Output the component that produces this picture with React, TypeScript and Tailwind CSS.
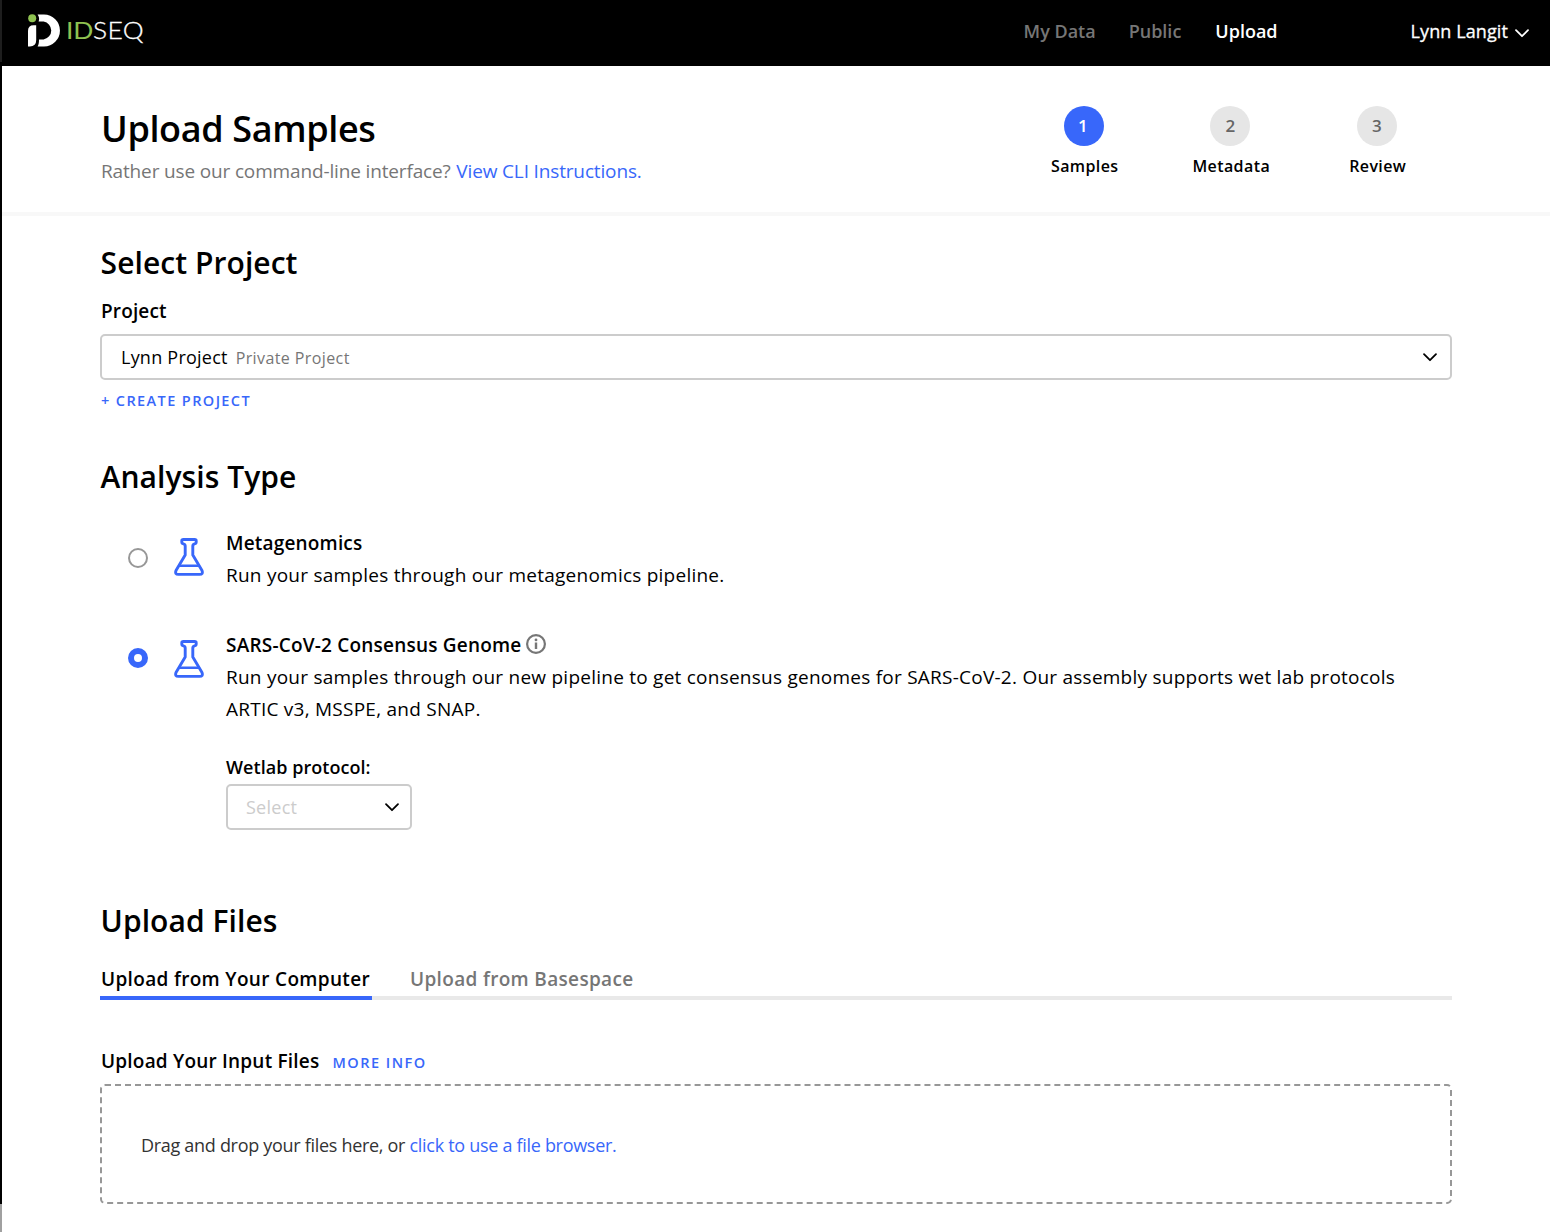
import type { ReactNode } from "react";

function Logo() {
  return (
    <div className="flex items-start">
      <svg width="33" height="33" viewBox="0 0 33 33" className="mt-[13.5px]">
        <circle cx="4.2" cy="4.2" r="4" fill="#8fc251" />
        <path d="M0 17 Q0 11.3 5.6 11.3 H8.2 V26 Q8.2 32.4 1.8 32.4 H0 Z" fill="#fff" />
        <path
          d="M9.6 0.5 H16 A15.9 15.9 0 0 1 16 32.4 H9.6 Q11 30.5 11 25.4 H15.6 A9 9 0 0 0 15.6 7.6 H10.6 Q12 4 9.6 0.5 Z"
          fill="#fff"
        />
      </svg>
      <div className="ml-[5px] mt-[15px] flex h-[30px] origin-left scale-x-[1.1] items-center whitespace-nowrap font-['Lato'] text-[24px] leading-[30px]">
        <span className="font-normal tracking-[-0.2px] text-[#8fc251]">ID</span>
        <span className="font-light tracking-[0.3px] text-white [-webkit-text-stroke:0.3px_white]">SEQ</span>
      </div>
    </div>
  );
}

function Chevron({ className }: { className?: string }) {
  return (
    <svg width="16" height="10" viewBox="0 0 16 10" className={className} fill="none" stroke="currentColor" strokeWidth="1.8" strokeLinecap="round" strokeLinejoin="round">
      <path d="M2 2.2 L8 8.2 L14 2.2" />
    </svg>
  );
}

function Flask() {
  return (
    <svg width="30" height="38" viewBox="0 0 30 38" fill="none" stroke="#3867fa" strokeWidth="2.9" strokeLinejoin="round" strokeLinecap="round">
      <path d="M9.4 1.5 H20.6 Q22.2 1.5 22.2 2.9 V4.1 Q22.2 5.6 20.6 5.9 Q18.8 6.3 18.8 8 V17 L28 32.4 Q29.4 36.4 25.6 36.4 H4.4 Q0.6 36.4 2 32.4 L11.2 17 V8 Q11.2 6.3 9.4 5.9 Q7.8 5.6 7.8 4.1 V2.9 Q7.8 1.5 9.4 1.5 Z" />
      <path d="M5.4 27.8 H24.6" strokeWidth="2.5" />
    </svg>
  );
}

function InfoIcon() {
  return (
    <svg width="20" height="20" viewBox="0 0 20 20" fill="none">
      <circle cx="10" cy="10" r="8.9" stroke="#767676" strokeWidth="2.2" />
      <circle cx="10" cy="5.9" r="1.4" fill="#767676" />
      <rect x="8.8" y="8.5" width="2.4" height="6.5" fill="#767676" />
    </svg>
  );
}

function Step({ n, label, active }: { n: number; label: string; active?: boolean }) {
  return (
    <div className="flex w-[146.5px] flex-col items-center">
      <div
        className={
          active
            ? "mr-0.5 flex h-10 w-10 items-center justify-center rounded-full bg-[#3867fa] pr-0.5 text-[17px] font-semibold leading-10 text-white"
            : "mr-0.5 flex h-10 w-10 items-center justify-center rounded-full bg-[#e6e6e6] text-[17px] font-semibold leading-10 text-[#666]"
        }
      >
        {n}
      </div>
      <div className="mt-2 h-6 text-[16px] font-semibold leading-6 tracking-[0.4px]">{label}</div>
    </div>
  );
}

function SectionTitle({ children }: { children: ReactNode }) {
  return <h2 className="h-10 pl-[0.6px] text-[30px] font-semibold leading-10 tracking-[0.06px]">{children}</h2>;
}

export default function App() {
  return (
    <div className="flex h-[1232px] w-[1550px] overflow-hidden bg-white font-['Open_Sans',sans-serif] text-black">
      <div className="flex w-0.5 shrink-0 flex-col">
        <div className="h-[62px] bg-[#1e1e1e]" />
        <div className="h-[1142px] bg-black" />
        <div className="flex-1 bg-[#a0a0a0]" />
      </div>
      <div className="flex w-[1548px] flex-col">
        <header className="flex h-[66px] shrink-0 items-start bg-black pl-[26px] text-[18px] leading-[26px]">
          <Logo />
          <nav className="ml-auto flex gap-[34px] pt-[18px] font-semibold text-[#767676]">
            <span>My Data</span>
            <span className="-ml-px">Public</span>
            <span className="text-white">Upload</span>
          </nav>
          <div className="ml-[133px] mr-5 flex items-center gap-1.5 pt-[18px] text-white">
            <span className="tracking-[0.1px] [-webkit-text-stroke:0.3px_white]">Lynn Langit</span>
            <Chevron className="mt-[4px]" />
          </div>
        </header>

        <section className="flex h-[150px] shrink-0 justify-between border-b-4 border-[#f8f8f8] pl-[99px] pr-[99px]">
          <div>
            <h1 className="mt-10 h-[46px] text-[36px] font-semibold leading-[46px] tracking-[-0.36px]">Upload Samples</h1>
            <p className="mt-[6px] h-[26px] text-[19px] leading-[26px] tracking-[-0.15px] text-[#767676]">
              Rather use our command-line interface? <a className="ml-px text-[#3867fa]">View CLI Instructions.</a>
            </p>
          </div>
          <div className="mt-10 flex">
            <Step n={1} label="Samples" active />
            <Step n={2} label="Metadata" />
            <Step n={3} label="Review" />
          </div>
        </section>

        <main className="flex w-[1450px] flex-col pl-[98px]">
          <div className="mt-[27px]">
            <SectionTitle>Select Project</SectionTitle>
          </div>
          <label className="mt-4 h-6 pl-px text-[19px] font-semibold leading-6 tracking-[0.14px]">Project</label>
          <div className="mt-[11px] flex h-[46px] items-center rounded-[5px] border-2 border-[#ccc] pl-[19px] pr-3">
            <span className="text-[18px] leading-6 tracking-[0.23px]">Lynn Project</span>
            <span className="ml-2 pt-0.5 text-[16px] leading-6 tracking-[0.4px] text-[#767676]">Private Project</span>
            <Chevron className="ml-auto" />
          </div>
          <a className="mt-[11px] h-5 pl-px text-[14.5px] font-semibold leading-5 tracking-[1.4px] text-[#3867fa]">+ CREATE PROJECT</a>

          <div className="mt-[46px]">
            <SectionTitle>Analysis Type</SectionTitle>
          </div>

          <div className="mt-[30px] flex">
            <div className="ml-7 mt-[21px] h-5 w-5 rounded-full border-2 border-[#979797]" />
            <div className="ml-[26px] mt-[11px]">
              <Flask />
            </div>
            <div className="ml-[22px] text-[19px] leading-8">
              <div className="font-semibold tracking-[0.18px]">Metagenomics</div>
              <p className="tracking-[0.24px]">Run your samples through our metagenomics pipeline.</p>
            </div>
          </div>

          <div className="mt-[38px] flex">
            <div className="ml-7 mt-[19px] h-5 w-5 rounded-full border-[6px] border-[#3867fa]" />
            <div className="ml-[26px] mt-[11px]">
              <Flask />
            </div>
            <div className="ml-[22px] text-[19px] leading-8">
              <div className="flex items-center font-semibold tracking-[0.2px]">
                SARS-CoV-2 Consensus Genome
                <span className="mb-0.5 ml-[5px]">
                  <InfoIcon />
                </span>
              </div>
              <p className="whitespace-nowrap tracking-[0.242px]">
                Run your samples through our new pipeline to get consensus genomes for SARS-CoV-2. Our assembly supports wet lab protocols
                <br />
                ARTIC v3, MSSPE, and SNAP.
              </p>
              <div className="mt-[30px] h-6 text-[18px] font-semibold leading-6 tracking-[0.05px]">Wetlab protocol:</div>
              <div className="mt-[5px] flex h-[46px] w-[186px] items-center justify-between rounded-[5px] border-2 border-[#ccc] pl-[18px] pr-[10px]">
                <span className="text-[18px] leading-6 tracking-[0.25px] text-[#ccc]">Select</span>
                <Chevron />
              </div>
            </div>
          </div>

          <div className="mt-[71px]">
            <SectionTitle>Upload Files</SectionTitle>
          </div>
          <div className="mt-[26px] flex h-[33px] gap-[38px] border-b-4 border-[#e9e9e9] text-[19px] font-semibold leading-6 tracking-[0.33px]">
            <div className="h-[32.5px] w-[272px] border-b-4 border-[#3867fa] pl-px">Upload from Your Computer</div>
            <div className="text-[#767676]">Upload from Basespace</div>
          </div>
          <div className="mt-[49px] flex h-6 items-baseline pl-px text-[19px] font-semibold leading-6 tracking-[0.2px]">
            Upload Your Input Files
            <a className="ml-[13px] text-[14.5px] tracking-[1.5px] text-[#3867fa]">MORE INFO</a>
          </div>
          <div className="mt-[11px] flex h-[120px] items-center rounded-[5px] border-2 border-dashed border-[#979797] pl-[39px] pt-0.5 text-[18px] tracking-[-0.3px] text-[#333]">
            <p>
              Drag and drop your files here, or <a className="text-[#3867fa]">click to use a file browser.</a>
            </p>
          </div>
        </main>
      </div>
    </div>
  );
}
